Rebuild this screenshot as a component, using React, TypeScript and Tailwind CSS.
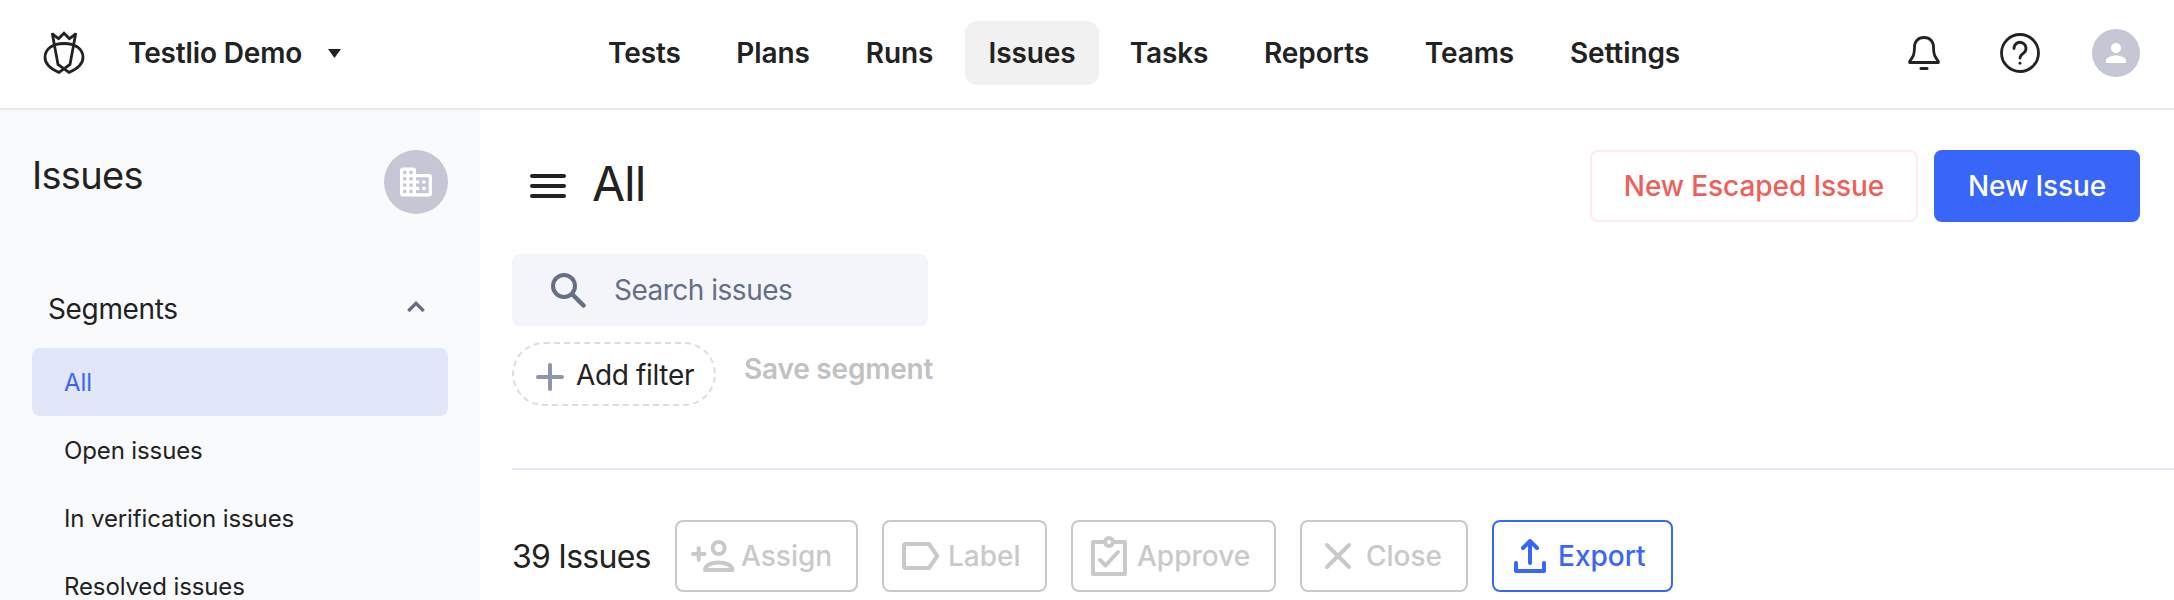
import type { ReactNode } from 'react';
import { MdPerson } from 'react-icons/md';

interface NavItem {
  name: string;
  width: string;
  active?: boolean;
}

interface Action {
  name: string;
  width: string;
  icon: ReactNode;
  pad: string;
  primary?: boolean;
}

const navItems: NavItem[] = [
  { name: 'Tests', width: 'w-[119px]' },
  { name: 'Plans', width: 'w-[122px]' },
  { name: 'Runs', width: 'w-[115px]' },
  { name: 'Issues', width: 'w-[134px]', active: true },
  { name: 'Tasks', width: 'w-[124px]' },
  { name: 'Reports', width: 'w-[155px]' },
  { name: 'Teams', width: 'w-[135px]' },
  { name: 'Settings', width: 'w-[160px]' },
];

const segments = ['All', 'Open issues', 'In verification issues', 'Resolved issues'];

const stroke = {
  fill: 'none',
  stroke: 'currentColor',
  strokeLinecap: 'round' as const,
  strokeLinejoin: 'round' as const,
};

function Logo() {
  return (
    <svg className="h-[46px] w-[42px]" viewBox="0 0 42 46" fill="none" stroke="currentColor" strokeWidth="2.8">
      <path d="m9.200 4 6.400 4.600L21 3.200l5.400 5.400L32.800 4" />
      <path d="M9.200 3 15 34.500l11 8C34 39 40 34 40 27.500 40 18.500 32 13.500 21 13.500S2 18.500 2 27.500C2 34 8 39 16 42.500l11-8L32.800 3" />
    </svg>
  );
}

function BuildingIcon() {
  return (
    <svg className="h-[30px] w-8" viewBox="0 0 32 30">
      <path
        fill="currentColor"
        d="M3 .5h10a3 3 0 0 1 3 3V7h13a3 3 0 0 1 3 3v16.500a3 3 0 0 1-3 3H3a3 3 0 0 1-3-3v-23a3 3 0 0 1 3-3z"
      />
      <g fill="#c5c8d4">
        {[3.800, 10.200, 16.500, 22.800].map((y) => (
          <g key={y}>
            <rect x="3" y={y} width="3.400" height="3.200" />
            <rect x="9.300" y={y} width="3.400" height="3.200" />
          </g>
        ))}
        <path d="M16 10.200h12.700v16.100H16v-3.200h3.200v-3.300H16v-3.200h3.200v-3.200H16z" />
      </g>
      <path fill="currentColor" d="M22.300 13.400h3.300v3.200h-3.300zM22.300 19.800h3.300v3.300h-3.300z" />
    </svg>
  );
}

const actions: Action[] = [
  {
    name: 'Assign',
    width: 'w-[183px]',
    pad: 'pl-[14px] gap-[6px]',
    icon: (
      <svg className="h-11 w-11" viewBox="0 0 44 44" {...stroke} strokeWidth="4">
        <path d="M2 20h11.500M7.700 14.200v11.600" />
        <circle cx="27.700" cy="14" r="6" />
        <path d="M14 36h27.500c0-5-7-7.500-13.800-7.500S14 31 14 36z" />
      </svg>
    ),
  },
  {
    name: 'Label',
    width: 'w-[165px]',
    pad: 'pl-[18px] gap-[8px]',
    icon: (
      <svg className="h-10 w-[38px]" viewBox="0 0 38 40" {...stroke} strokeWidth="4">
        <path d="M4 8h23l8.200 12L27 32H4a1.500 1.500 0 0 1-2-1.500v-21A1.500 1.500 0 0 1 4 8z" />
      </svg>
    ),
  },
  {
    name: 'Approve',
    width: 'w-[205px]',
    pad: 'pl-[18px] gap-[10px]',
    icon: (
      <svg className="h-11 w-9" viewBox="0 0 36 44" {...stroke} strokeWidth="4">
        <path d="M13.500 8H2v32h32V8H22.500" />
        <circle cx="18" cy="8" r="4" />
        <path d="m9 26 5.500 5.500L27 18" />
      </svg>
    ),
  },
  {
    name: 'Close',
    width: 'w-[168px]',
    pad: 'pl-[22px] gap-[14px]',
    icon: (
      <svg className="h-7 w-7" viewBox="0 0 28 28" {...stroke} strokeWidth="4">
        <path d="m3 3 22 22M25 3 3 25" />
      </svg>
    ),
  },
  {
    name: 'Export',
    width: 'w-[181px]',
    pad: 'pl-5 gap-3',
    primary: true,
    icon: (
      <svg className="h-9 w-8" viewBox="0 0 32 36" {...stroke} strokeWidth="4">
        <path d="M2 25v8h28v-8M16 25V4M9 10l7-7 7 7" />
      </svg>
    ),
  },
];

function Header() {
  return (
    <header className="flex h-[110px] items-start border-b-2 border-[#e9e9e9] bg-white">
      <div className="flex h-[106px] w-[585px] items-center pl-[43px]">
        <Logo />
        <span className="ml-[43px] text-[28px] font-semibold tracking-[-0.15px]">Testlio Demo</span>
        <svg className="ml-[26px] h-[9px] w-[13px]" viewBox="0 0 13 9">
          <path d="M0 0h13L6.500 9z" fill="currentColor" />
        </svg>
      </div>
      <nav className="flex h-[106px] items-center gap-2">
        {navItems.map((item) => (
          <a
            key={item.name}
            className={`${item.width} ${
              item.active ? 'bg-[#f1f1f1]' : ''
            } flex h-16 items-center justify-center rounded-xl text-[28px] font-semibold tracking-[-0.1px]`}
          >
            {item.name}
          </a>
        ))}
      </nav>
      <div className="ml-auto flex h-[106px] items-center pr-[34px]">
        <svg className="h-10 w-8" viewBox="0 0 32 40" {...stroke} strokeWidth="2.800">
          <path d="M16 4.500c-6 0-9.500 4-9.500 9.500 0 8-1.500 10-4.900 14.500V29.500h28.800v-1C27 24 25.500 22 25.500 14c0-5.500-3.500-9.500-9.500-9.500z" />
          <path d="M13 35.500h6" strokeWidth="3" />
        </svg>
        <svg className="ml-[60px] h-10 w-10" viewBox="0 0 40 40" {...stroke} strokeWidth="2.800">
          <circle cx="20" cy="20" r="18.500" />
          <path d="M14 15.500a6 6 0 1 1 9.500 4.700c-2 1.500-3.500 2.700-3.500 4.800" />
          <path d="M20 30.200v.1" />
        </svg>
        <div className="ml-[52px] flex size-12 items-center justify-center rounded-full bg-[#c5c8d4] text-white">
          <MdPerson size={30} />
        </div>
      </div>
    </header>
  );
}

function Sidebar() {
  return (
    <aside className="w-[480px] shrink-0 bg-[#f9fafc] px-8 pt-10">
      <div className="flex h-16 items-start justify-between">
        <h2 className="text-[38px] leading-[50px] tracking-[-0.7px]">Issues</h2>
        <div className="flex size-16 items-center justify-center rounded-full bg-[#c5c8d4] text-white">
          <BuildingIcon />
        </div>
      </div>
      <div className="mt-[62px] flex h-[62px] items-center justify-between pr-[23px] pl-4">
        <span className="pt-1 text-[28px] tracking-[-0.35px]">Segments</span>
        <svg className="h-3 w-[18px] text-[#666e85]" viewBox="0 0 18 12" fill="none" stroke="currentColor" strokeWidth="3.200">
          <path d="m1.300 10 7.700-7.700L16.700 10" />
        </svg>
      </div>
      <ul className="mt-[10px]">
        {segments.map((name) => (
          <li
            key={name}
            className={`${
              name === 'All' ? 'bg-[#e2e6f9] text-[#3866f8]' : ''
            } flex h-[68px] items-center rounded-lg px-8 pt-0.5 text-[24px] tracking-[-0.12px]`}
          >
            {name}
          </li>
        ))}
      </ul>
    </aside>
  );
}

export default function App() {
  return (
    <div className="h-[600px] w-[2174px] overflow-hidden bg-white font-[Inter,sans-serif] text-[#222]">
      <Header />
      <div className="flex h-[490px]">
        <Sidebar />
        <main className="flex-1 pt-10 pl-8">
          <div className="flex h-[72px] items-center pr-[34px]">
            <svg className="ml-[18px] h-6 w-9" viewBox="0 0 36 24" {...stroke} strokeWidth="4">
              <path d="M2 2h32M2 12h32M2 22h32" />
            </svg>
            <h1 className="ml-[26px] pb-[5px] text-[48px] leading-[66px] tracking-[-1px]">All</h1>
            <button className="ml-auto h-[72px] w-[328px] rounded-lg border-2 border-[#ffe9e9] text-[28px] font-medium tracking-[-0.08px] text-[#ed6059]">
              New Escaped Issue
            </button>
            <button className="ml-4 h-[72px] w-[206px] rounded-lg bg-[#3866f8] text-[28px] font-medium tracking-[-0.08px] text-white">
              New Issue
            </button>
          </div>
          <div className="mt-8 flex h-[72px] w-[416px] items-center rounded-lg bg-[#f4f5fa] pl-[39px] text-[#666e85]">
            <svg className="h-[35px] w-[35px]" viewBox="0 0 35 35" {...stroke} strokeWidth="4">
              <circle cx="13" cy="13" r="11" />
              <path d="m21.500 21.500 11 11" strokeWidth="4.500" />
            </svg>
            <span className="ml-7 text-[28px] tracking-[-0.5px]">Search issues</span>
          </div>
          <div className="mt-4 flex h-16">
            <button className="flex h-16 w-[204px] items-center rounded-full border-2 border-dashed border-[#ddd] pl-[22px] text-[28px]">
              <svg className="mt-1.5 h-7 w-7 text-[#8e96a9]" viewBox="0 0 28 28" {...stroke} strokeWidth="4">
                <path d="M14 2v24M2 14h24" />
              </svg>
              <span className="ml-3 pt-0.5 tracking-[-0.35px] whitespace-nowrap">Add filter</span>
            </button>
            <button className="ml-7 h-[53px] text-[28px] font-semibold tracking-[-0.2px] text-[#c1c1c1]">Save segment</button>
          </div>
          <div className="mt-[62px] border-t-2 border-[#e2e8f5]" />
          <div className="mt-[50px] flex h-[72px] items-center">
            <span className="w-[163px] pt-0.5 text-[32px] tracking-[-0.75px] whitespace-nowrap">39 Issues</span>
            <div className="flex gap-6">
              {actions.map((action) => (
                <button
                  key={action.name}
                  className={`${action.width} ${action.pad} ${
                    action.primary ? 'border-[#3866f8] text-[#3866f8]' : 'border-[#c9c9c9] text-[#c9c9c9]'
                  } flex h-[72px] items-center rounded-lg border-2 text-[28px] font-medium`}
                >
                  {action.icon}
                  <span>{action.name}</span>
                </button>
              ))}
            </div>
          </div>
        </main>
      </div>
    </div>
  );
}
